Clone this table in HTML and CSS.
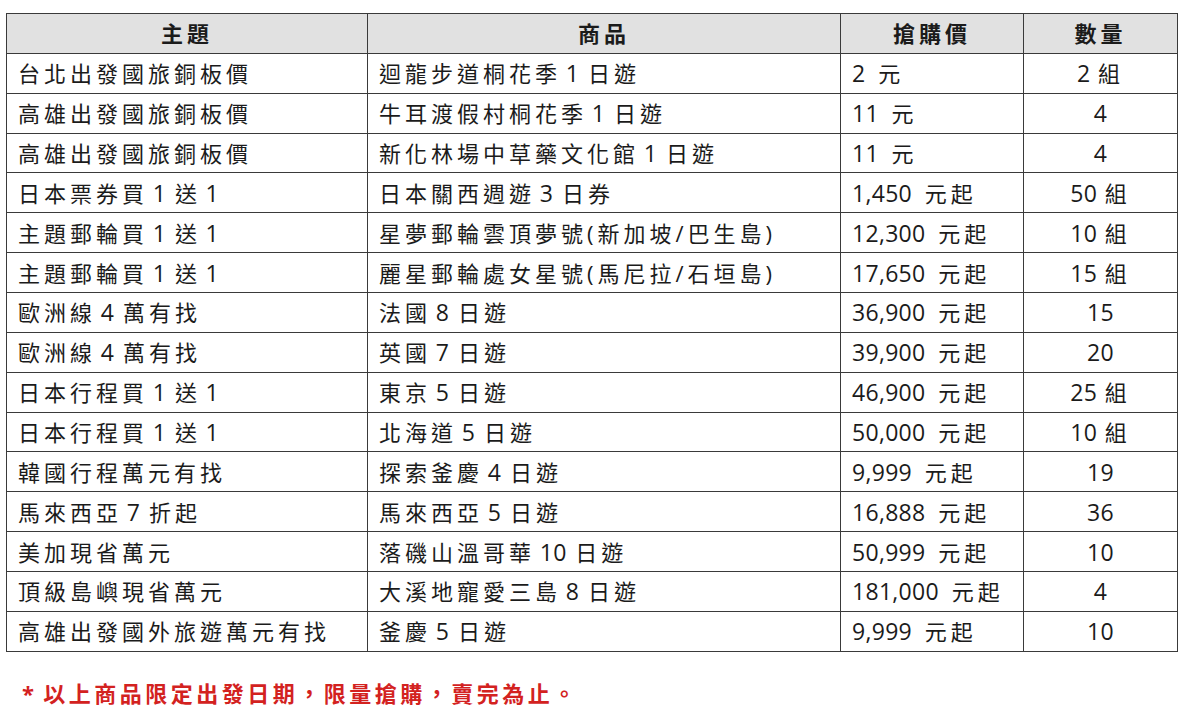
FILE: index.html
```html
<!DOCTYPE html>
<html lang="zh-Hant">
<head>
<meta charset="utf-8">
<title>搶購價</title>
<link rel="stylesheet" href="styles.css">
</head>
<body>
<div class="page">
  <table class="deals">
    <colgroup>
      <col class="c1"><col class="c2"><col class="c3"><col class="c4">
    </colgroup>
    <thead>
      <tr><th>主題</th><th>商品</th><th>搶購價</th><th>數量</th></tr>
    </thead>
    <tbody>
      <tr><td>台北出發國旅銅板價</td><td>迴龍步道桐花季 <span class="n">1</span> 日遊</td><td class="price"><span class="n">2</span> 元</td><td class="qty"><span class="n">2</span> 組</td></tr>
      <tr><td>高雄出發國旅銅板價</td><td>牛耳渡假村桐花季 <span class="n">1</span> 日遊</td><td class="price"><span class="n">11</span> 元</td><td class="qty"><span class="n">4</span></td></tr>
      <tr><td>高雄出發國旅銅板價</td><td>新化林場中草藥文化館 <span class="n">1</span> 日遊</td><td class="price"><span class="n">11</span> 元</td><td class="qty"><span class="n">4</span></td></tr>
      <tr><td>日本票券買 <span class="n">1</span> 送 <span class="n">1</span></td><td>日本關西週遊 <span class="n">3</span> 日券</td><td class="price"><span class="n">1,450</span> 元起</td><td class="qty"><span class="n">50</span> 組</td></tr>
      <tr><td>主題郵輪買 <span class="n">1</span> 送 <span class="n">1</span></td><td>星夢郵輪雲頂夢號(新加坡/巴生島)</td><td class="price"><span class="n">12,300</span> 元起</td><td class="qty"><span class="n">10</span> 組</td></tr>
      <tr><td>主題郵輪買 <span class="n">1</span> 送 <span class="n">1</span></td><td>麗星郵輪處女星號(馬尼拉/石垣島)</td><td class="price"><span class="n">17,650</span> 元起</td><td class="qty"><span class="n">15</span> 組</td></tr>
      <tr><td>歐洲線 <span class="n">4</span> 萬有找</td><td>法國 <span class="n">8</span> 日遊</td><td class="price"><span class="n">36,900</span> 元起</td><td class="qty"><span class="n">15</span></td></tr>
      <tr><td>歐洲線 <span class="n">4</span> 萬有找</td><td>英國 <span class="n">7</span> 日遊</td><td class="price"><span class="n">39,900</span> 元起</td><td class="qty"><span class="n">20</span></td></tr>
      <tr><td>日本行程買 <span class="n">1</span> 送 <span class="n">1</span></td><td>東京 <span class="n">5</span> 日遊</td><td class="price"><span class="n">46,900</span> 元起</td><td class="qty"><span class="n">25</span> 組</td></tr>
      <tr><td>日本行程買 <span class="n">1</span> 送 <span class="n">1</span></td><td>北海道 <span class="n">5</span> 日遊</td><td class="price"><span class="n">50,000</span> 元起</td><td class="qty"><span class="n">10</span> 組</td></tr>
      <tr><td>韓國行程萬元有找</td><td>探索釜慶 <span class="n">4</span> 日遊</td><td class="price"><span class="n">9,999</span> 元起</td><td class="qty"><span class="n">19</span></td></tr>
      <tr><td>馬來西亞 <span class="n">7</span> 折起</td><td>馬來西亞 <span class="n">5</span> 日遊</td><td class="price"><span class="n">16,888</span> 元起</td><td class="qty"><span class="n">36</span></td></tr>
      <tr><td>美加現省萬元</td><td>落磯山溫哥華 <span class="n">10</span> 日遊</td><td class="price"><span class="n">50,999</span> 元起</td><td class="qty"><span class="n">10</span></td></tr>
      <tr><td>頂級島嶼現省萬元</td><td>大溪地寵愛三島 <span class="n">8</span> 日遊</td><td class="price"><span class="n">181,000</span> 元起</td><td class="qty"><span class="n">4</span></td></tr>
      <tr><td>高雄出發國外旅遊萬元有找</td><td>釜慶 <span class="n">5</span> 日遊</td><td class="price"><span class="n">9,999</span> 元起</td><td class="qty"><span class="n">10</span></td></tr>
    </tbody>
  </table>
  <p class="note"><span class="star">*</span> 以上商品限定出發日期，限量搶購，賣完為止。</p>
</div>
</body>
</html>
```
FILE: styles.css
```css
html, body {
  margin: 0;
  padding: 0;
  background: #ffffff;
}

.page {
  padding: 13px 0 0 6px;
  font-family: "Open Sans", "Noto Sans CJK TC", sans-serif;
  color: #1b1b1b;
}

.deals {
  border-collapse: collapse;
  table-layout: fixed;
  width: 1171px;
  border: 1px solid #3a3a3a;
}

.c1 { width: 361px; }
.c2 { width: 473px; }
.c3 { width: 183px; }
.c4 { width: 154px; }

.deals th,
.deals td {
  border: 1px solid #3a3a3a;
  height: 38.87px;
  padding: 0 11px;
  font-size: 22px;
  line-height: 26px;
  letter-spacing: 4px;
  word-spacing: -3px;
  text-align: left;
  vertical-align: middle;
  white-space: nowrap;
}

.deals th {
  background: #e1e1e1;
  font-weight: 700;
  text-align: center;
  letter-spacing: 4px;
  word-spacing: 0;
}

.deals td.price {
  word-spacing: 3px;
}

.deals td.qty {
  text-align: center;
  word-spacing: -2px;
}

.n {
  font-size: 23px;
  letter-spacing: 0.3px;
  margin: 0 2px 0 -2px;
}

.deals td.price .n,
.deals td.qty .n {
  margin: 0;
}

.note {
  margin: 27px 0 0 16px;
  font-size: 22px;
  line-height: 28px;
  font-weight: 700;
  letter-spacing: 3.5px;
  word-spacing: 0;
  color: #d3221f;
}

.note .star {
  letter-spacing: 0;
}
```
